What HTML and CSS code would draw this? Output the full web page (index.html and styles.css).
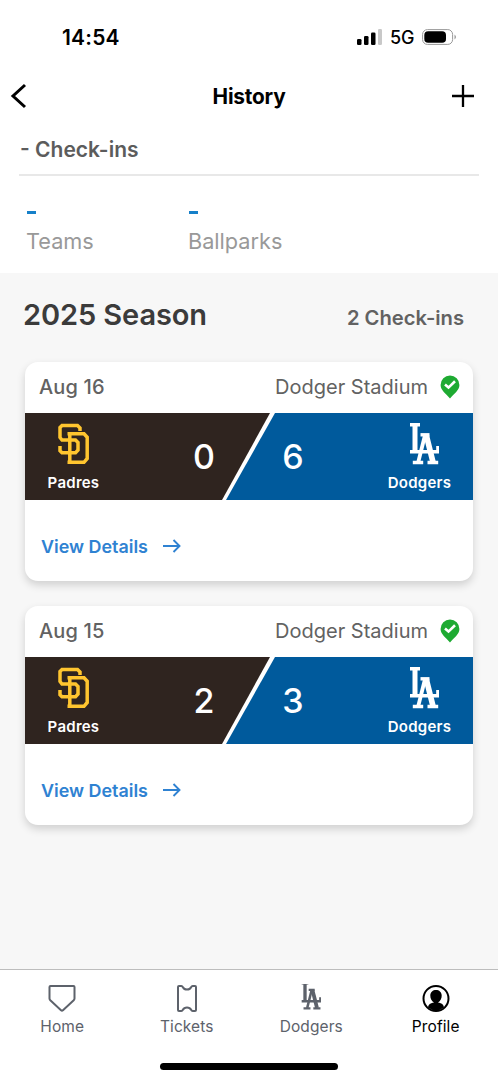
FILE: index.html
```html
<!DOCTYPE html>
<html lang="en">
<head>
<meta charset="utf-8">
<title>History</title>
<link rel="stylesheet" href="styles.css">
</head>
<body>
<svg class="defs" width="0" height="0">
  <symbol id="la" viewBox="0 0 30 42">
    <path d="M1 1.8H11M1 28.8H29V23" stroke-width="3.6"/>
    <path d="M6 1V29" stroke-width="5"/>
    <path d="M11.5 11.8H20.5" stroke-width="3.4"/>
    <path d="M16 12L9.3 39" stroke-width="3.8"/>
    <path d="M17.2 12L24 39" stroke-width="5.6"/>
    <path d="M3.8 39.5H14.2M18.5 39.5H29.2" stroke-width="3.6"/>
  </symbol>
  <symbol id="sd" viewBox="0 0 34 42">
    <path d="M23 8V5L20.5 2.5H5L3 4.5V14.5L5 17H18.5L21 19.5V27L18.5 29.8H5L3 27.8V23M10.5 10.7H27L30.2 14.2V35.5L27 39.3H10.5M12.8 10.5V39.3"/>
  </symbol>
  <symbol id="pin" viewBox="0 0 20 24">
    <path d="M10 .5A9.4 9.4 0 0 0 .6 10C.6 15.5 6 18.5 10 23.5C14 18.5 19.4 15.5 19.4 10A9.4 9.4 0 0 0 10 .5Z" fill="#1eaa32"/>
    <path d="M5 9.6L8.5 12.6L15 6.2" fill="none" stroke="#fff" stroke-width="2.6"/>
  </symbol>
  <symbol id="arrow" viewBox="0 0 19 14">
    <path d="M1 7H17.5M11.5 1L17.5 7L11.5 13"/>
  </symbol>
</svg>
<div class="screen">
  <header class="status">
    <span class="time">14:54</span>
    <div class="status-icons">
      <svg width="26" height="16" viewBox="0 0 26 16"><rect x="0" y="10" width="4.5" height="6" rx="1.3"/><rect x="7" y="7" width="4.5" height="9" rx="1.3"/><rect x="14" y="3.5" width="4.5" height="12.5" rx="1.3"/><rect x="21" y="0" width="4" height="16" rx="1.3" fill="#c8c8c8"/></svg>
      <span class="network">5G</span>
      <svg width="35" height="16" viewBox="0 0 35 16"><rect x=".6" y=".6" width="30" height="14.8" rx="4.8" fill="#fff" stroke="#999"/><rect x="2.3" y="2.2" width="21.7" height="11.6" rx="3.8"/><path d="M32.5 5.5Q35.5 8 32.5 10.5Z" fill="#999"/></svg>
    </div>
  </header>
  <nav class="title-bar">
    <svg class="back" width="18" height="26" viewBox="0 0 18 26"><path d="M15 2L3 13L15 24"/></svg>
    <h1>History</h1>
    <svg class="add" width="22" height="22" viewBox="0 0 22 22"><path d="M0 11H22M11 0V22"/></svg>
  </nav>
  <section class="summary">
    <h2>- Check-ins</h2>
    <div class="stats">
      <div class="stat"><i class="dash"></i><span>Teams</span></div>
      <div class="stat"><i class="dash"></i><span>Ballparks</span></div>
    </div>
  </section>
  <main>
    <div class="season"><h3>2025 Season</h3><span>2 Check-ins</span></div>
    <article class="card">
      <div class="card-head"><span class="date">Aug 16</span><span class="park">Dodger Stadium</span><svg width="20" height="24"><use href="#pin"/></svg></div>
      <div class="score">
        <svg class="split" width="448" height="87"><path d="M0 0H245L197 87H0Z" fill="#2f241f"/><path d="M250 0H448V87H201Z" fill="#005a9c"/></svg>
        <div class="team"><svg class="sd" width="34" height="42"><use href="#sd"/></svg><b>Padres</b></div>
        <span class="runs">0</span><span class="runs home-runs">6</span>
        <div class="team"><svg class="la" width="30" height="42"><use href="#la"/></svg><b>Dodgers</b></div>
      </div>
      <a class="details">View Details <svg width="19" height="14"><use href="#arrow"/></svg></a>
    </article>
    <article class="card">
      <div class="card-head"><span class="date">Aug 15</span><span class="park">Dodger Stadium</span><svg width="20" height="24"><use href="#pin"/></svg></div>
      <div class="score">
        <svg class="split" width="448" height="87"><path d="M0 0H245L197 87H0Z" fill="#2f241f"/><path d="M250 0H448V87H201Z" fill="#005a9c"/></svg>
        <div class="team"><svg class="sd" width="34" height="42"><use href="#sd"/></svg><b>Padres</b></div>
        <span class="runs">2</span><span class="runs home-runs">3</span>
        <div class="team"><svg class="la" width="30" height="42"><use href="#la"/></svg><b>Dodgers</b></div>
      </div>
      <a class="details">View Details <svg width="19" height="14"><use href="#arrow"/></svg></a>
    </article>
  </main>
  <footer>
    <div class="tabs">
      <a class="tab"><svg width="28" height="30" viewBox="0 0 28 30"><path d="M2.5 2H25.5Q26.5 2 26.5 3V14.5Q26.5 15.5 25.7 16.3L15 26.2Q14 27 13 26.2L2.3 16.3Q1.5 15.5 1.5 14.5V3Q1.5 2 2.5 2Z"/></svg><span>Home</span></a>
      <a class="tab"><svg width="28" height="30" viewBox="0 0 28 30"><path d="M6 2H8.3Q9.3 2 9.9 3.2C11.5 6.3 16.5 6.3 18.1 3.2Q18.7 2 19.7 2H22Q23 2 23 3V26Q23 27 22 27H19.7Q18.7 27 18.1 25.8C16.5 22.7 11.5 22.7 9.9 25.8Q9.3 27 8.3 27H6Q5 27 5 26V3Q5 2 6 2Z"/></svg><span>Tickets</span></a>
      <a class="tab"><svg class="la-tab" width="20" height="30" viewBox="0 0 20 30"><use href="#la" x="0" y="-2" width="20" height="28"/></svg><span>Dodgers</span></a>
      <a class="tab active"><svg width="28" height="30" viewBox="0 0 28 30"><circle cx="14" cy="14.5" r="12.5"/><path class="solid" d="M6 23.5C6.5 20 9 19.2 12 18.6C9.5 17 8.3 14.5 8.3 11.5C8.3 8 11 6 14 6S19.7 8 19.7 11.5C19.7 14.5 18.5 17 16 18.6C19 19.2 21.5 20 22 23.5Q14 29.5 6 23.5Z"/></svg><span>Profile</span></a>
    </div>
    <div class="home-indicator"></div>
  </footer>
</div>
</body>
</html>
```
FILE: styles.css
```css
* { box-sizing: border-box; }
body { margin: 0; font-family: Inter, "Liberation Sans", sans-serif; background: #fff; }
h1, h2, h3 { margin: 0; }
svg { display: block; flex: none; }
.defs { position: absolute; }
.screen { width: 498px; height: 1080px; display: flex; flex-direction: column; overflow: hidden; white-space: nowrap; }
.status { height: 72px; padding: 2px 41px 0 62px; display: flex; align-items: center; justify-content: space-between; }
.time { font-size: 21px; font-weight: 600; letter-spacing: .2px; }
.status-icons { display: flex; align-items: center; gap: 7px; }
.network { font-size: 18px; font-weight: 500; width: 25px; letter-spacing: -.2px; }
.title-bar { height: 48px; padding: 0 24px 0 10px; display: grid; grid-template-columns: 60px 1fr 46px; align-items: center; }
.title-bar h1 { text-align: center; font-size: 20.8px; line-height: 24px; padding-top: 1px; font-weight: 700; letter-spacing: -.2px; }
.back, .add { fill: none; stroke: #000; stroke-width: 3; }
.add { justify-self: end; stroke-width: 2.3; }
.summary { height: 153px; padding: 0 19px; }
.summary h2 { height: 56px; padding-left: 1px; border-bottom: 2px solid #e8e8e8; color: #5c5c5c; font-size: 21px; line-height: 59px; font-weight: 600; }
.stats { display: grid; grid-template-columns: 162px 162px; padding: 35px 7px 0; }
.stat { display: flex; flex-direction: column; gap: 14px; color: #999; font-size: 21.7px; line-height: 27px; }
.dash { width: 9px; height: 3px; margin-left: 1px; background: #1680c9; }
main { flex: 1; padding: 0 25px; background: #f7f7f7; }
.season { height: 89px; padding: 0 9px 6px 0; display: flex; justify-content: space-between; align-items: center; }
.season h3 { margin-left: -2px; color: #3b3b3b; font-size: 29px; font-weight: 600; letter-spacing: -.1px; }
.season span { color: #626262; font-size: 20.2px; font-weight: 600; padding-top: 6px; }
.card { height: 219px; margin-bottom: 25px; border-radius: 13px; background: #fff; box-shadow: 0 4px 9px rgba(0,0,0,.16); }
.card-head { height: 51px; padding: 0 13px 2px 14px; display: flex; align-items: center; color: #626262; font-size: 20px; }
.date { font-weight: 500; margin-right: auto; letter-spacing: .15px; }
.park { margin-right: 12px; }
.score { height: 87px; display: grid; grid-template-columns: 97px 164px 80px 107px; color: #fff; position: relative; }
.split { position: absolute; inset: 0; }
.team { position: relative; display: flex; flex-direction: column; align-items: center; padding-top: 10px; }
.team b { font-size: 15px; line-height: 20px; font-weight: 600; letter-spacing: .25px; margin-top: 8px; }
.sd, .la { fill: none; stroke: currentColor; }
.sd { color: #ffc52f; stroke-width: 3.5; }
.la { margin-left: 9px; }
.runs { position: relative; justify-self: center; width: 24px; text-align: center; line-height: 88px; font-size: 34px; font-weight: 500; }
.home-runs { justify-self: start; margin-left: -5px; }
.details { height: 81px; padding: 12px 0 0 16px; display: flex; align-items: center; gap: 15px; color: #2f82d2; font-size: 17.9px; font-weight: 600; }
.details svg { fill: none; stroke: currentColor; stroke-width: 1.9; margin: -1px 0 0 -1px; }
footer { height: 111px; border-top: 1px solid #bdbdbd; background: #fff; }
.tabs { height: 93px; display: grid; grid-template-columns: repeat(4, 124.5px); }
.tab { display: flex; flex-direction: column; align-items: center; gap: 3px; padding-top: 14px; color: #5d626b; font-size: 15.5px; line-height: 20px; letter-spacing: .1px; }
.tab svg { fill: none; stroke: currentColor; stroke-width: 2; }
.tab .solid { fill: currentColor; stroke: none; }
.active { color: #000; }
.home-indicator { width: 178px; height: 7px; margin: 0 auto; border-radius: 4px; background: #000; }
```
